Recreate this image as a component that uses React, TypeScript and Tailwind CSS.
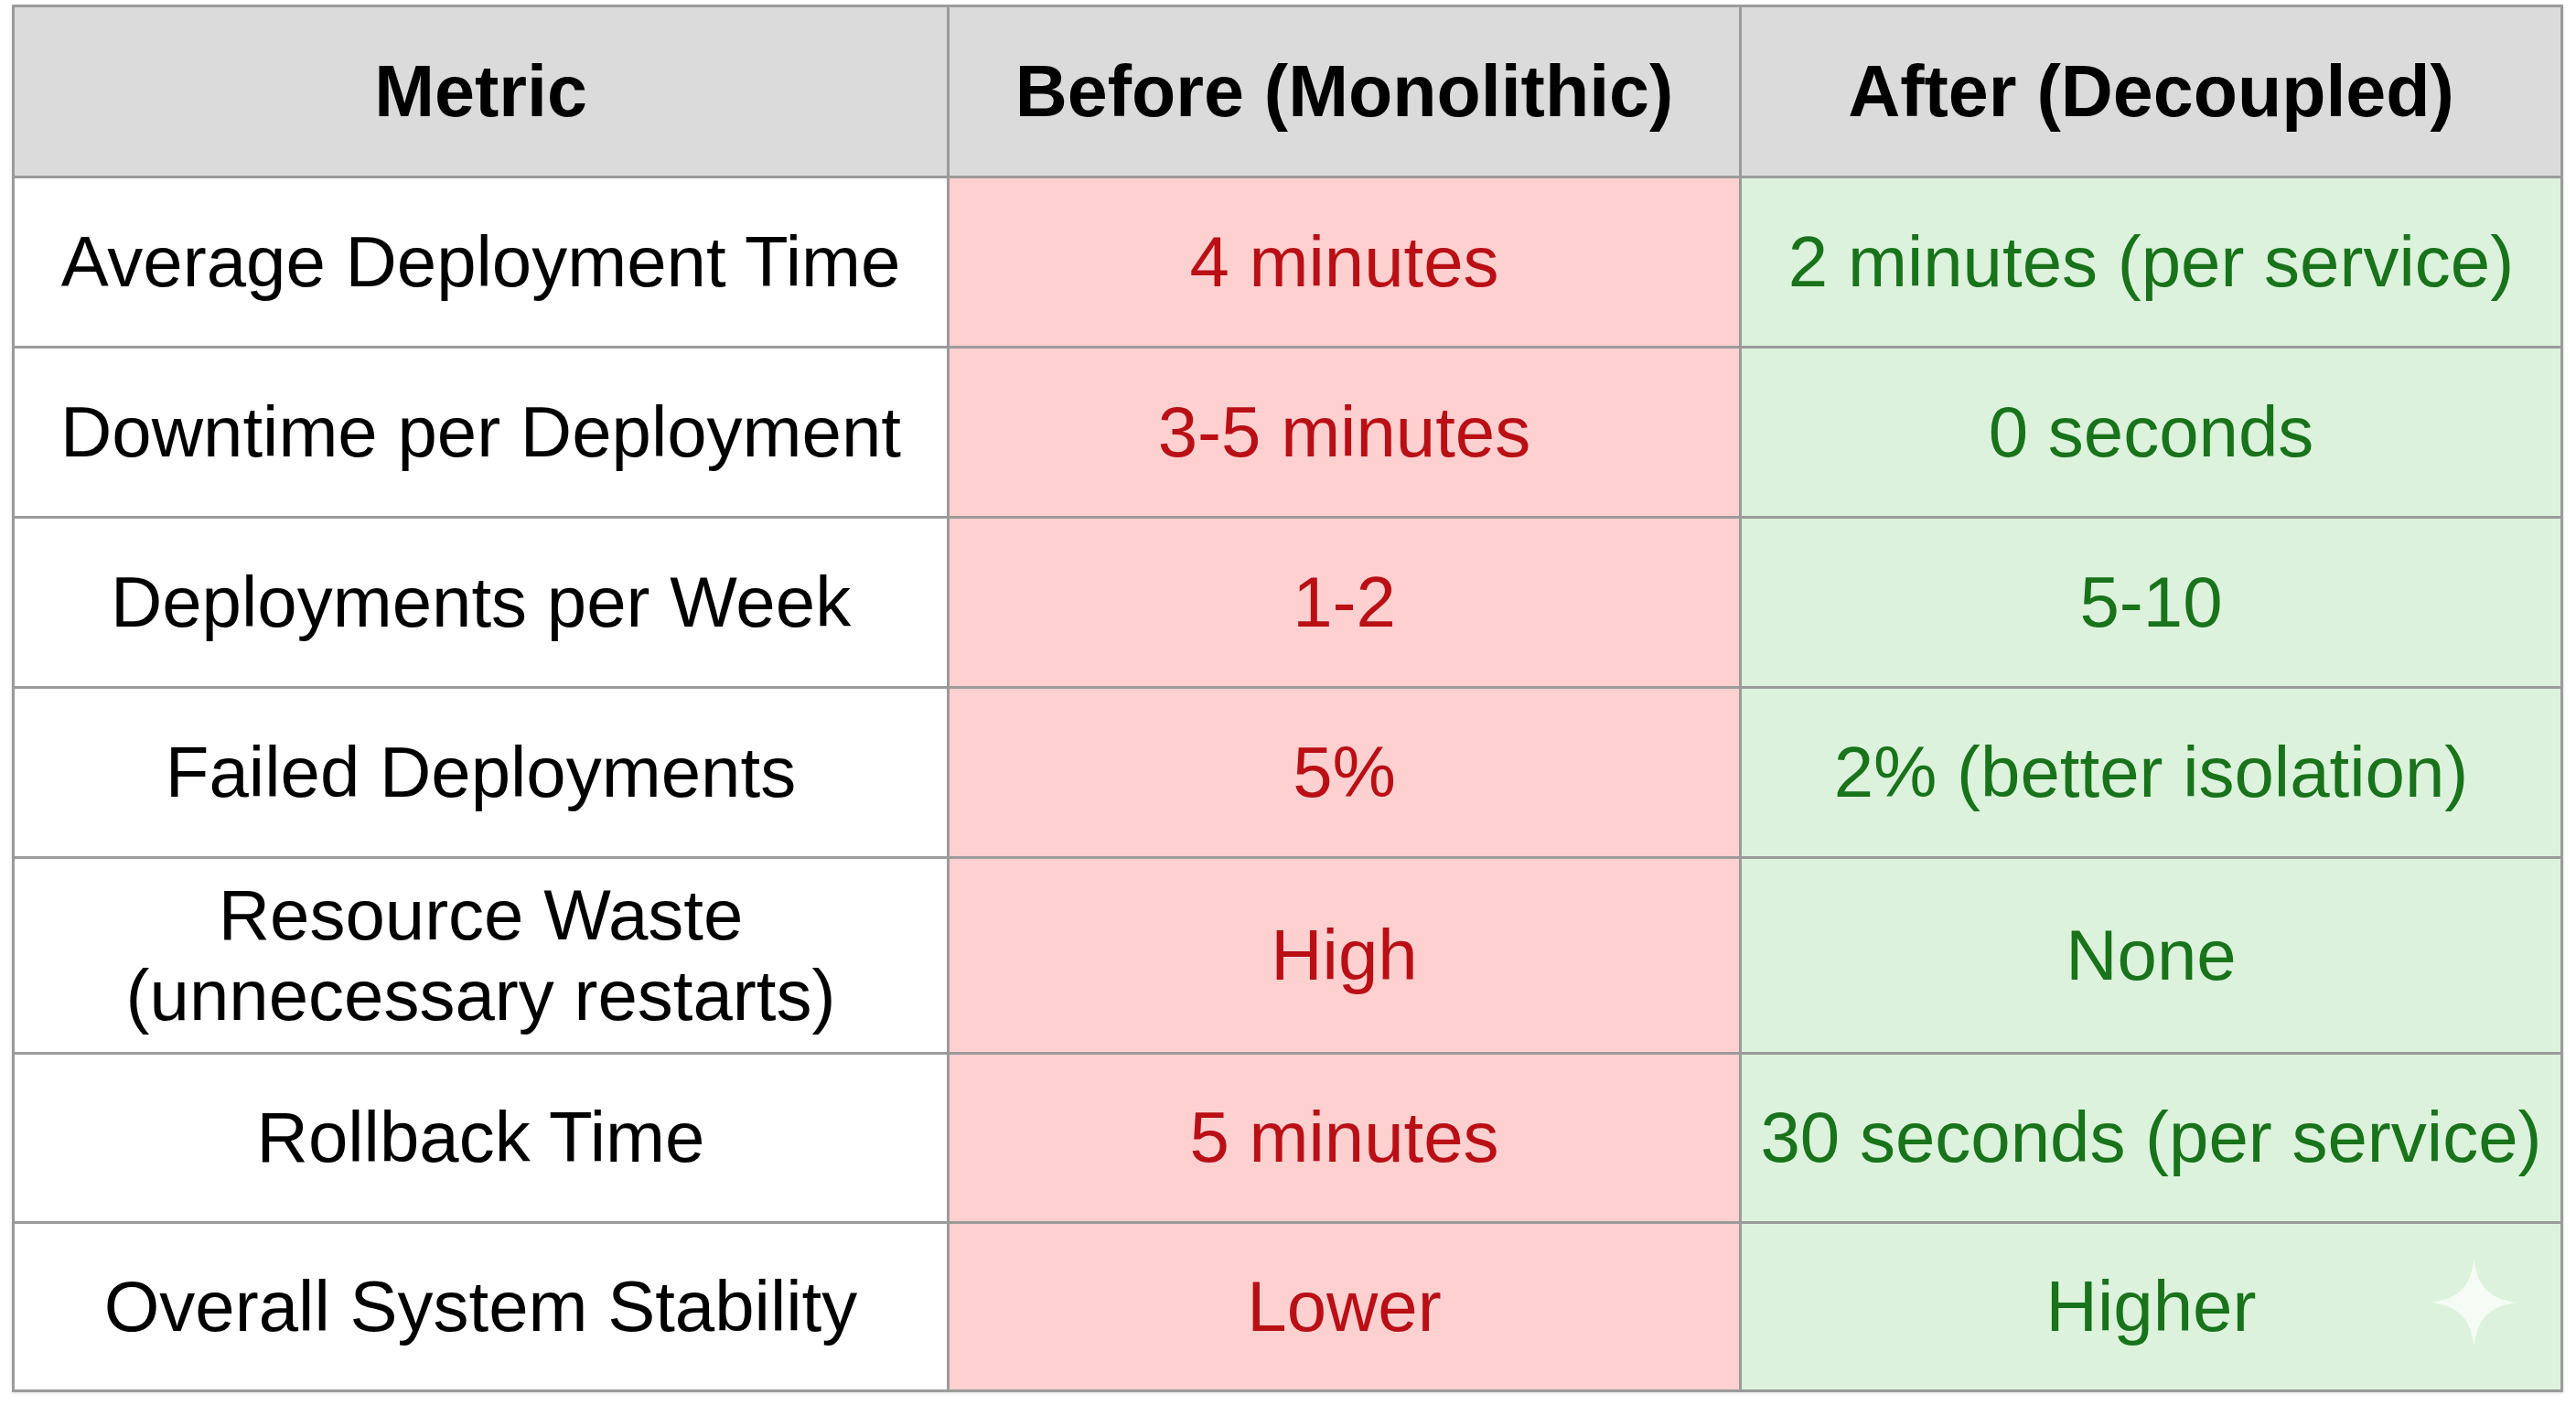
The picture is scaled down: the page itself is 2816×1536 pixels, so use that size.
import React from "react";

type Row = { metric: string[]; before: string; after: string; h: string };

const ROWS: Row[] = [
  { metric: ["Average Deployment Time"], before: "4 minutes", after: "2 minutes (per service)", h: "h-[183px]" },
  { metric: ["Downtime per Deployment"], before: "3-5 minutes", after: "0 seconds", h: "h-[183px]" },
  { metric: ["Deployments per Week"], before: "1-2", after: "5-10", h: "h-[183px]" },
  { metric: ["Failed Deployments"], before: "5%", after: "2% (better isolation)", h: "h-[183px]" },
  { metric: ["Resource Waste", "(unnecessary restarts)"], before: "High", after: "None", h: "h-[211px]" },
  { metric: ["Rollback Time"], before: "5 minutes", after: "30 seconds (per service)", h: "h-[182px]" },
  { metric: ["Overall System Stability"], before: "Lower", after: "Higher", h: "h-[181px]" },
];

const cell = "flex items-center justify-center text-center";

function Sparkle() {
  return (
    <svg
      viewBox="0 0 100 100"
      className="absolute left-[753px] top-[38px] h-[96px] w-[95px]"
      aria-hidden
    >
      <path
        d="M50 0 C54 32 68 46 100 50 C68 54 54 68 50 100 C46 68 32 54 0 50 C32 46 46 32 50 0 Z"
        fill="#ffffff"
        fillOpacity="0.7"
      />
    </svg>
  );
}

export default function App() {
  return (
    <div className="min-h-screen bg-white pl-[13px] pt-[5px] font-['Liberation_Sans',Arial,sans-serif]">
      <div className="grid w-[2789px] grid-cols-[1019px_863px_895px] gap-[3px] bg-[#9b9b9b] p-[3px] shadow-[0_1px_3px_rgba(0,0,0,0.15)]">
        <div className={`${cell} h-[184px] bg-[#dbdbdb] text-[79px] font-bold text-black`}>Metric</div>
        <div className={`${cell} h-[184px] bg-[#dbdbdb] text-[79px] font-bold text-black`}>Before (Monolithic)</div>
        <div className={`${cell} h-[184px] bg-[#dbdbdb] text-[79px] font-bold text-black`}>After (Decoupled)</div>
        {ROWS.map((r, i) => (
          <React.Fragment key={r.before + i}>
            <div className={`${cell} ${r.h} flex-col bg-white text-[78px] leading-[1.12] text-black`}>
              {r.metric.map((m) => (
                <span key={m}>{m}</span>
              ))}
            </div>
            <div className={`${cell} ${r.h} bg-[#ffd0d0] text-[78px] leading-[1.12] text-[#b90f15]`}>{r.before}</div>
            <div className={`${cell} ${r.h} relative bg-[#dcf2dc] text-[78px] leading-[1.12] text-[#18731a]`}>
              {r.after}
              {i === ROWS.length - 1 && <Sparkle />}
            </div>
          </React.Fragment>
        ))}
      </div>
    </div>
  );
}
